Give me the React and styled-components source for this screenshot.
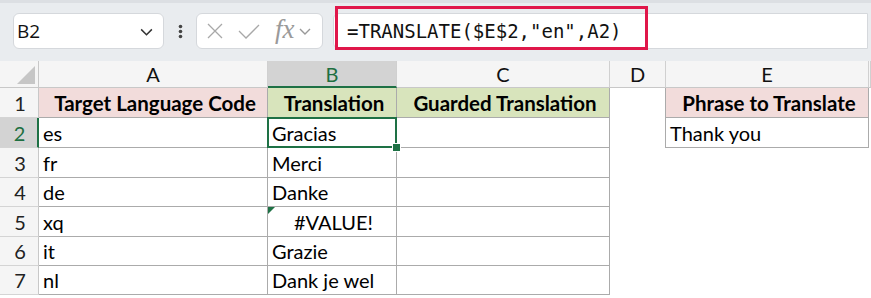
import React from "react";
import styled, { createGlobalStyle } from "styled-components";

const Global = createGlobalStyle`
  html, body { margin: 0; padding: 0; background: #ffffff; }
  body { width: 871px; height: 298px; overflow: hidden; font-family: Lato, "Open Sans", sans-serif; }
  * { box-sizing: border-box; }
`;

const Page = styled.div`
  width: 871px;
  height: 298px;
  display: flex;
  flex-direction: column;
  background: #fff;
`;

const Toolbar = styled.div`
  height: 61px;
  background: #e9ecef;
  border-top: 3px solid #dcdfe3;
  display: flex;
  align-items: flex-start;
  padding: 10px 0 0 13px;
`;

const Box = styled.div`
  height: 36px;
  background: #ffffff;
  border: 1px solid #d5d8dc;
  border-radius: 6px;
  display: flex;
  align-items: center;
`;

const NameBox = styled(Box)`
  width: 151px;
  padding: 0 9px 0 3px;
  justify-content: space-between;
  font-family: "Open Sans", sans-serif;
  font-size: 19px;
  color: #111;
`;

const Dots = styled.div`
  width: 32px;
  height: 36px;
  display: flex;
  align-items: center;
  justify-content: center;
`;

const FxBox = styled(Box)`
  width: 127px;
  padding: 0 0 0 9px;
`;

const FxLabel = styled.span`
  font-family: "Liberation Serif", "DejaVu Serif", serif;
  font-style: italic;
  font-size: 27px;
  color: #9a9a9a;
  margin-right: 3px;
  line-height: 1;
  padding-bottom: 3px;
`;

const FormulaWrap = styled.div`
  position: relative;
  flex: 1;
  margin-left: 10px;
  margin-right: 3px;
`;

const FormulaBar = styled(Box)`
  border-radius: 6px 0 0 6px;
  padding-left: 13px;
  font-family: "DejaVu Sans Mono", "Liberation Mono", monospace;
  font-size: 19px;
  color: #111;
`;

const Highlight = styled.div`
  position: absolute;
  left: 2px;
  top: -7px;
  width: 313px;
  height: 44px;
  border: 3px solid #e0174a;
  pointer-events: none;
`;

const Sheet = styled.div`
  display: grid;
  grid-template-columns: 39px 229px 129px 213px 56px 203px 2px;
  font-family: Lato, "Open Sans", sans-serif;
`;

const ColHead = styled.div`
  height: 27px;
  background: ${(p) => (p.$sel ? "#d3d3d3" : "#f5f5f5")};
  color: ${(p) => (p.$sel ? "#1e6f41" : "#111")};
  border-right: 1px solid #d0d0d0;
  border-bottom: ${(p) => (p.$sel ? "2px solid #1e7145" : "1px solid #c8c8c8")};
  display: flex;
  align-items: center;
  justify-content: center;
  font-size: 20px;
  padding-top: ${(p) => (p.$sel ? "1px" : "0")};
`;

const Corner = styled.div`
  height: 27px;
  background: #f5f5f5;
  border-right: 1px solid #c8c8c8;
  border-bottom: 1px solid #c8c8c8;
  display: flex;
  align-items: flex-end;
  justify-content: flex-end;
  padding: 0 3px 3px 0;
`;

const RowHead = styled.div`
  height: ${(p) => p.$h}px;
  background: ${(p) => (p.$sel ? "#d3d3d3" : "#f5f5f5")};
  color: ${(p) => (p.$sel ? "#1e6f41" : "#222")};
  border-right: ${(p) => (p.$sel ? "2px solid #1e7145" : "1px solid #c8c8c8")};
  border-bottom: 1px solid #d4d4d4;
  display: flex;
  align-items: center;
  justify-content: center;
  font-size: 20px;
  padding-left: 2px;
`;

const Cell = styled.div`
  position: relative;
  height: ${(p) => p.$h}px;
  background: ${(p) => p.$bg || "#ffffff"};
  border-right: ${(p) => (p.$r ? "1px solid #ababab" : "none")};
  border-bottom: ${(p) => (p.$b ? "1px solid #ababab" : "none")};
  display: flex;
  align-items: center;
  justify-content: ${(p) => (p.$center ? "center" : "flex-start")};
  padding-left: ${(p) => (p.$indent ? "26px" : "4px")};
  font-size: ${(p) => (p.$bold ? "20.5px" : "20px")};
  font-weight: ${(p) => (p.$bold ? 700 : 400)};
  color: #000;
  white-space: nowrap;
`;

const Selection = styled.div`
  position: absolute;
  z-index: 2;
  left: -1px;
  top: -1px;
  right: -1px;
  bottom: -1px;
  border: 2px solid #1e7145;
  pointer-events: none;
`;

const Handle = styled.div`
  position: absolute;
  right: -6px;
  bottom: -6px;
  width: 9px;
  height: 9px;
  background: #1e7145;
  border: 1px solid #fff;
`;

const ErrorFlag = styled.div`
  position: absolute;
  left: 0;
  top: 0;
  width: 0;
  height: 0;
  border-top: 7px solid #1e7145;
  border-right: 7px solid transparent;
`;

const Chevron = ({ size = 14, color = "#333" }) => (
  <svg width={size} height={size} viewBox="0 0 14 14">
    <path d="M2 5 L7 10 L12 5" fill="none" stroke={color} strokeWidth="1.4" />
  </svg>
);

const heights = [30, 30, 30, 29, 30, 29, 29];

const rows = [
  ["Target Language Code", "Translation", "Guarded Translation", "", "Phrase to Translate"],
  ["es", "Gracias", "", "", "Thank you"],
  ["fr", "Merci", "", "", ""],
  ["de", "Danke", "", "", ""],
  ["xq", "#VALUE!", "", "", ""],
  ["it", "Grazie", "", "", ""],
  ["nl", "Dank je wel", "", "", ""],
];

export default function App() {
  return (
    <Page>
      <Global />
      <Toolbar>
        <NameBox>
          <span>B2</span>
          <Chevron size={15} color="#333" />
        </NameBox>
        <Dots>
          <svg width="5" height="15" viewBox="0 0 5 15">
            <circle cx="2.5" cy="2.5" r="1.8" fill="#444" />
            <circle cx="2.5" cy="7.5" r="1.8" fill="#444" />
            <circle cx="2.5" cy="12.5" r="1.8" fill="#444" />
          </svg>
        </Dots>
        <FxBox>
          <svg width="18" height="18" viewBox="0 0 18 18" style={{ marginRight: 14 }}>
            <path d="M2 2 L16 16 M16 2 L2 16" stroke="#a8a8a8" strokeWidth="1.3" fill="none" />
          </svg>
          <svg width="22" height="18" viewBox="0 0 22 18" style={{ marginRight: 15 }}>
            <path d="M1 9 L8 16 L21 3" stroke="#a8a8a8" strokeWidth="1.3" fill="none" />
          </svg>
          <FxLabel>fx</FxLabel>
          <Chevron size={14} color="#999" />
        </FxBox>
        <FormulaWrap>
          <FormulaBar>=TRANSLATE($E$2,"en",A2)</FormulaBar>
          <Highlight />
        </FormulaWrap>
      </Toolbar>
      <Sheet>
        <Corner>
          <svg width="18" height="18" viewBox="0 0 18 18">
            <path d="M18 0 L18 18 L0 18 Z" fill="#c6c6c6" />
          </svg>
        </Corner>
        <ColHead>A</ColHead>
        <ColHead $sel>B</ColHead>
        <ColHead>C</ColHead>
        <ColHead>D</ColHead>
        <ColHead>E</ColHead>
        <ColHead />
        {rows.map((r, i) => {
          const h = heights[i];
          const header = i === 0;
          return (
            <React.Fragment key={i}>
              <RowHead $h={h} $sel={i === 1}>{i + 1}</RowHead>
              <Cell $h={h} $r $b $bg={header ? "#f2dcdb" : undefined} $bold={header} $center={header}>
                {r[0]}
              </Cell>
              <Cell
                $h={h}
                $r
                $b
                $bg={header ? "#d8e4bc" : undefined}
                $bold={header}
                $center={header}
                $indent={r[1] === "#VALUE!"}
              >
                {r[1]}
                {i === 1 && (
                  <Selection>
                    <Handle />
                  </Selection>
                )}
                {r[1] === "#VALUE!" && <ErrorFlag />}
              </Cell>
              <Cell $h={h} $r $b $bg={header ? "#d8e4bc" : undefined} $bold={header} $center={header}>
                {r[2]}
              </Cell>
              <Cell $h={h} $r={i < 2} />
              <Cell
                $h={h}
                $r={i < 2}
                $b={i < 2}
                $bg={header ? "#f2dcdb" : undefined}
                $bold={header}
                $center={header}
              >
                {r[4]}
              </Cell>
              <Cell $h={h} />
            </React.Fragment>
          );
        })}
      </Sheet>
    </Page>
  );
}
